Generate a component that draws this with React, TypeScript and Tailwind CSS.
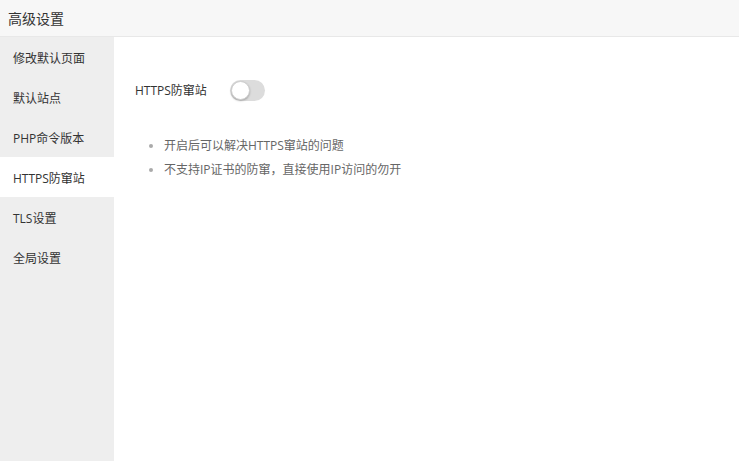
import React from "react";

const items = ["修改默认页面", "默认站点", "PHP命令版本", "HTTPS防窜站", "TLS设置", "全局设置"];

export default function App() {
  return (
    <div
      className="w-[739px] h-[461px] flex flex-col bg-white overflow-hidden"
      style={{ fontFamily: '"Open Sans","Noto Sans CJK SC",sans-serif' }}
    >
      <div className="h-[37px] shrink-0 bg-[#f7f7f7] border-b border-[#e8e8e8] flex items-center pl-[8px] pt-[1px] text-[14px] text-[#333]">
        高级设置
      </div>
      <div className="flex flex-1">
        <div className="w-[114px] bg-[#eeeeee] flex flex-col">
          {items.map((t, i) => (
            <div
              key={t}
              className={`h-[40px] flex items-center pl-[13px] pt-[3px] text-[12px] text-[#333] ${i === 3 ? "bg-white" : ""}`}
            >
              {t}
            </div>
          ))}
        </div>
        <div className="flex-1 pl-[21px] pt-[42px]">
          <div className="flex items-center h-[22px]">
            <span className="text-[12px] text-[#333] w-[95px] pt-[1px]">HTTPS防窜站</span>
            <div className="w-[35px] h-[21px] rounded-full bg-[#dcdcdc] relative">
              <div className="absolute left-[1px] top-[1px] w-[19px] h-[19px] rounded-full bg-white border border-[#cfcfcf] shadow-[0_1px_2px_rgba(0,0,0,0.25)]" />
            </div>
          </div>
          <ul className="mt-[35px] pl-[14px] text-[12px] text-[#666] flex flex-col gap-[5px]">
            <li className="flex items-center h-[19px]">
              <span className="w-[4px] h-[4px] rounded-full bg-[#aaa] mr-[11px]" />
              <span className="pt-[1px]">开启后可以解决HTTPS窜站的问题</span>
            </li>
            <li className="flex items-center h-[19px]">
              <span className="w-[4px] h-[4px] rounded-full bg-[#aaa] mr-[11px]" />
              <span className="pt-[1px]">不支持IP证书的防窜，直接使用IP访问的勿开</span>
            </li>
          </ul>
        </div>
      </div>
    </div>
  );
}
